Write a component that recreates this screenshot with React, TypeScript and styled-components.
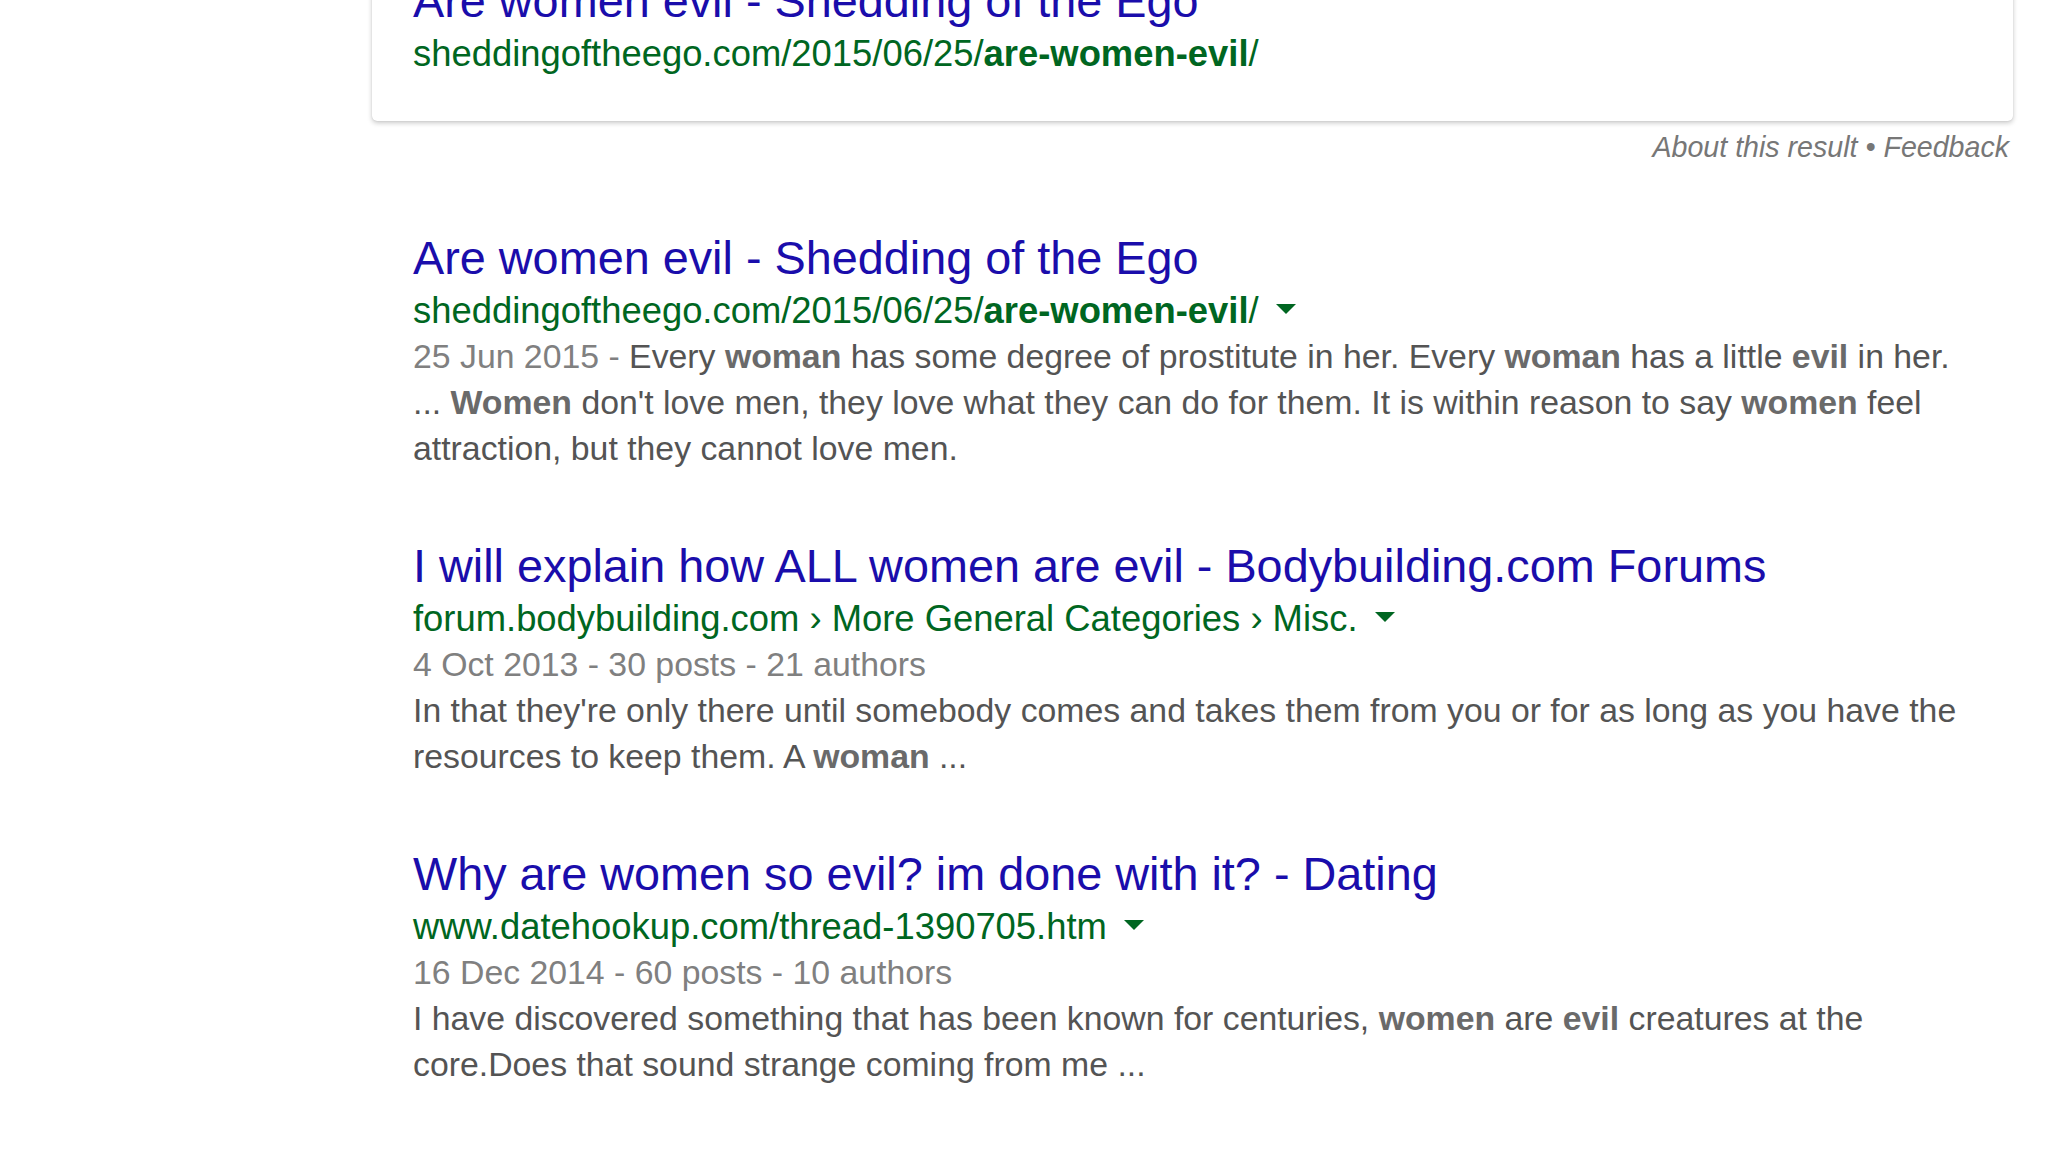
import styled, { createGlobalStyle } from 'styled-components';

const GlobalStyle = createGlobalStyle`
    html, body {
        margin: 0;
        padding: 0;
        background: #ffffff;
        overflow: hidden;
    }
    body {
        font-family: "Liberation Sans", Arial, sans-serif;
    }
`;

const Page = styled.div`
    width: 2048px;
    height: 1152px;
    overflow: hidden;
`;

// the page is scrolled: the top of the first card lies above the window
const Column = styled.div`
    margin-left: 372px;
    margin-top: -30px;
    width: 1641px;
`;

const Card = styled.div`
    background: #fff;
    border-radius: 0 0 5px 5px;
    box-shadow: 0 2px 5px rgba(0, 0, 0, 0.22), 0 0 1px rgba(0, 0, 0, 0.18);
    padding: 0 41px 45px;
`;

const CardFooter = styled.div`
    text-align: right;
    padding-right: 4px;
    margin-top: 9px;
    font-size: 28.6px;
    line-height: 34px;
    font-style: italic;
    color: #777;
`;

const Results = styled.div`
    padding: 63px 41px 0;
    display: flex;
    flex-direction: column;
    gap: 64px;
`;

const Result = styled.div`
    width: 1560px;
`;

const Title = styled.a`
    display: block;
    font-size: 46.8px;
    line-height: 62px;
    color: #1a0dab;
    text-decoration: none;
    white-space: nowrap;
`;

const Cite = styled.div`
    display: flex;
    align-items: center;
    font-size: 36.4px;
    line-height: 44px;
    color: #006621;
    white-space: nowrap;

    b {
        font-weight: bold;
    }
`;

const Arrow = styled.span`
    display: inline-block;
    margin-left: 17px;
    margin-top: -4px;
    width: 0;
    height: 0;
    border-left: 10px solid transparent;
    border-right: 10px solid transparent;
    border-top: 10px solid #006621;
`;

const Snippet = styled.div`
    font-size: 33.8px;
    line-height: 46px;
    color: #545454;

    b {
        color: #6a6a6a;
        font-weight: bold;
    }
`;

const Meta = styled.span`
    color: #808080;
`;

const MetaLine = styled.div`
    color: #808080;
`;

const results = [
    {
        title: 'Are women evil - Shedding of the Ego',
        cite: (
            <>
                sheddingoftheego.com/2015/06/25/<b>are-women-evil</b>/
            </>
        ),
        body: (
            <>
                <Meta>25 Jun 2015 - </Meta>Every <b>woman</b> has some degree of prostitute in her. Every{' '}
                <b>woman</b> has a little <b>evil</b> in her. ... <b>Women</b> don't love men, they love what
                they can do for them. It is within reason to say <b>women</b> feel attraction, but they cannot
                love men.
            </>
        ),
    },
    {
        title: 'I will explain how ALL women are evil - Bodybuilding.com Forums',
        cite: <>forum.bodybuilding.com › More General Categories › Misc.</>,
        meta: '4 Oct 2013 - 30 posts - 21 authors',
        body: (
            <>
                In that they're only there until somebody comes and takes them from you or for as long as you
                have the resources to keep them. A <b>woman</b> ...
            </>
        ),
    },
    {
        title: 'Why are women so evil? im done with it? - Dating',
        cite: <>www.datehookup.com/thread-1390705.htm</>,
        meta: '16 Dec 2014 - 60 posts - 10 authors',
        body: (
            <>
                I have discovered something that has been known for centuries, <b>women</b> are <b>evil</b>{' '}
                creatures at the core.Does that sound strange coming from me ...
            </>
        ),
    },
];

const App = () => {
    return (
        <Page>
            <GlobalStyle />
            <Column>
                <Card>
                    <Title href="#">Are women evil - Shedding of the Ego</Title>
                    <Cite>
                        <span>
                            sheddingoftheego.com/2015/06/25/<b>are-women-evil</b>/
                        </span>
                    </Cite>
                </Card>
                <CardFooter>About this result • Feedback</CardFooter>
                <Results>
                    {results.map((r) => (
                        <Result key={r.title}>
                            <Title href="#">{r.title}</Title>
                            <Cite>
                                <span>{r.cite}</span>
                                <Arrow />
                            </Cite>
                            <Snippet>
                                {r.meta && <MetaLine>{r.meta}</MetaLine>}
                                {r.body}
                            </Snippet>
                        </Result>
                    ))}
                </Results>
            </Column>
        </Page>
    );
};

export default App;
